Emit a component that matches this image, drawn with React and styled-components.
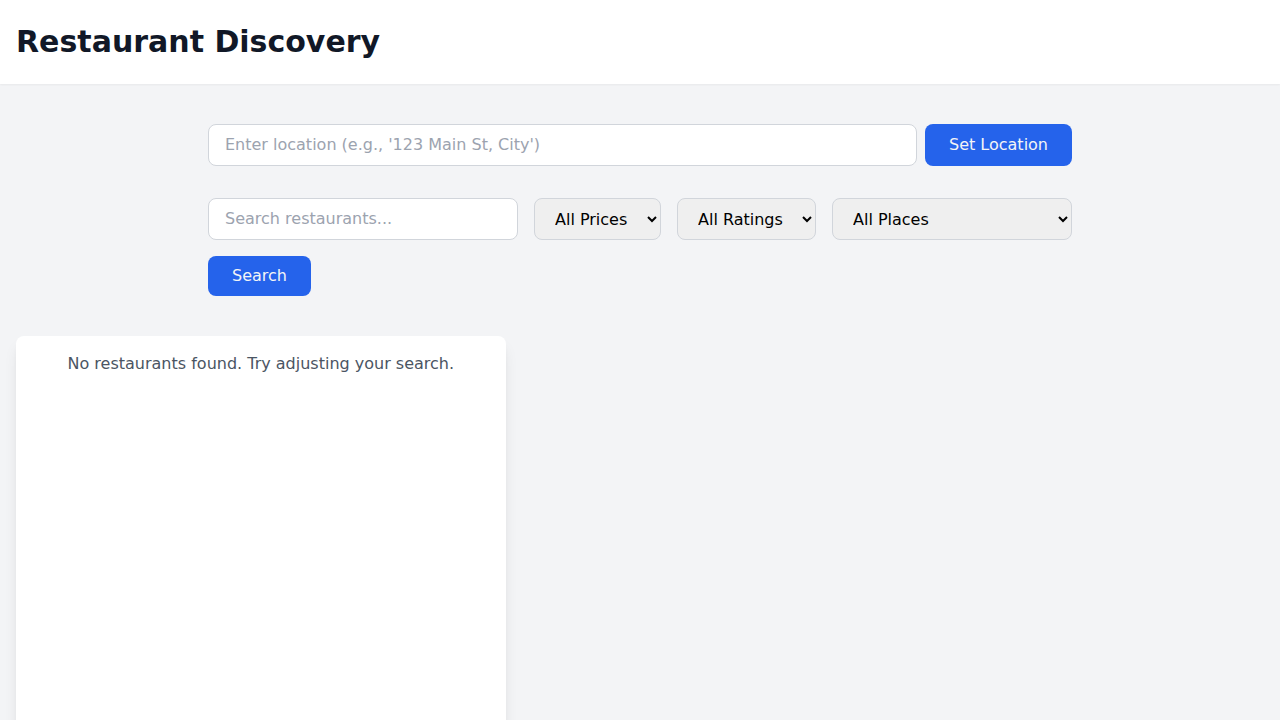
import React from 'react';
import styled, { createGlobalStyle } from 'styled-components';

const GlobalStyle = createGlobalStyle`
  *, *::before, *::after { box-sizing: border-box; }
  body {
    margin: 0;
    min-height: 100vh;
    background: #f3f4f6;
    color: #111827;
    font-family: "DejaVu Sans", sans-serif;
    font-size: 16px;
    line-height: 24px;
  }
`;

const Header = styled.header`
  padding: 24px 16px;
  background: #ffffff;
  box-shadow: 0 1px 2px 0 rgb(0 0 0 / 0.05);
`;

const Title = styled.h1`
  margin: 0;
  font-size: 30px;
  line-height: 36px;
  font-weight: 700;
`;

const Filters = styled.section`
  display: flex;
  flex-direction: column;
  gap: 32px;
  max-width: 896px;
  margin: 0 auto;
  padding: 40px 16px;
`;

const FormRow = styled.form`
  display: flex;
  flex-wrap: ${({ $wrap }) => ($wrap ? 'wrap' : 'nowrap')};
  gap: ${({ $gap }) => $gap}px;
`;

const TextInput = styled.input`
  flex: 1;
  min-width: ${({ $minWidth }) => $minWidth || 0}px;
  padding: 8px 16px;
  border: 1px solid #d1d5db;
  border-radius: 8px;
  background: #ffffff;
  color: inherit;
  font: inherit;

  &::placeholder { color: #9ca3af; opacity: 1; }
`;

const Select = styled.select`
  width: ${({ $width }) => ($width ? `${$width}px` : 'auto')};
  padding: 8px 16px;
  border: 1px solid #d1d5db;
  border-radius: 8px;
  background-color: #efefef;
  color: #000000;
  font: inherit;
`;

const Button = styled.button`
  padding: 8px 24px;
  border: 0;
  border-radius: 8px;
  background: #2563eb;
  color: #f3f4f6;
  font: inherit;
  cursor: pointer;

  &:hover { background: #1d4ed8; }
`;

const Results = styled.section`
  display: grid;
  grid-template-columns: 2fr 3fr;
  gap: 24px;
  padding: 0 16px;
`;

const ResultList = styled.div`
  height: 600px;
  padding: 16px;
  overflow-y: auto;
  border-radius: 8px;
  background: #ffffff;
  box-shadow: 0 10px 15px -3px rgb(0 0 0 / 0.1), 0 4px 6px -4px rgb(0 0 0 / 0.1);
`;

const EmptyMessage = styled.p`
  margin: 0;
  color: #4b5563;
  text-align: center;
`;

const stopSubmit = (event) => event.preventDefault();

export default function App() {
  return (
    <>
      <GlobalStyle />
      <Header>
        <Title>Restaurant Discovery</Title>
      </Header>
      <main>
        <Filters>
          <FormRow $gap={8} onSubmit={stopSubmit}>
            <TextInput
              type="text"
              aria-label="Location"
              placeholder="Enter location (e.g., '123 Main St, City')"
            />
            <Button type="submit">Set Location</Button>
          </FormRow>
          <FormRow $gap={16} $wrap onSubmit={stopSubmit}>
            <TextInput
              type="text"
              aria-label="Search restaurants"
              placeholder="Search restaurants..."
              $minWidth={200}
            />
            <Select aria-label="Price">
              <option>All Prices</option>
            </Select>
            <Select aria-label="Rating">
              <option>All Ratings</option>
            </Select>
            <Select aria-label="Place type" $width={240}>
              <option>All Places</option>
            </Select>
            <Button type="submit">Search</Button>
          </FormRow>
        </Filters>
        <Results>
          <ResultList>
            <EmptyMessage>No restaurants found. Try adjusting your search.</EmptyMessage>
          </ResultList>
        </Results>
      </main>
    </>
  );
}
